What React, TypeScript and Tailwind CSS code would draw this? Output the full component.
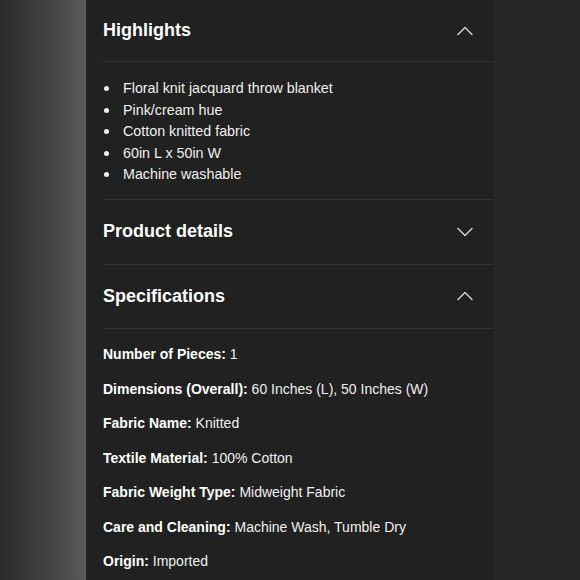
import { ReactNode } from "react";

type SectionProps = {
  title: string;
  open: boolean;
  height: string;
  children?: ReactNode;
};

const Chevron = ({ up }: { up: boolean }) => (
  <svg width="16" height="10" viewBox="0 0 16 10" fill="none" className="text-[#d6d6d6]">
    <path
      d={up ? "M1 8.5 L8 1.5 L15 8.5" : "M1 1.5 L8 8.5 L15 1.5"}
      stroke="currentColor"
      strokeWidth="1.4"
      strokeLinecap="round"
      strokeLinejoin="round"
    />
  </svg>
);

const Section = ({ title, open, height, children }: SectionProps) => (
  <div>
    <div className={`flex items-center justify-between border-b border-[#343434] pr-[21px] ${height}`}>
      <h2 className="text-[18px] font-bold text-white">{title}</h2>
      <Chevron up={open} />
    </div>
    {children}
  </div>
);

const highlights = [
  "Floral knit jacquard throw blanket",
  "Pink/cream hue",
  "Cotton knitted fabric",
  "60in L x 50in W",
  "Machine washable",
];

const specs: [string, string][] = [
  ["Number of Pieces:", "1"],
  ["Dimensions (Overall):", "60 Inches (L), 50 Inches (W)"],
  ["Fabric Name:", "Knitted"],
  ["Textile Material:", "100% Cotton"],
  ["Fabric Weight Type:", "Midweight Fabric"],
  ["Care and Cleaning:", "Machine Wash, Tumble Dry"],
  ["Origin:", "Imported"],
];

export default function App() {
  return (
    <div
      className="flex h-[580px] w-[580px] overflow-hidden bg-[#272727]"
      style={{ fontFamily: '"Liberation Sans", Arial, sans-serif' }}
    >
      <div className="w-[86px] shrink-0 bg-gradient-to-r from-[#2b2b2b] via-[#404040] to-[#5a5a5a]" />
      <div className="w-[408px] shrink-0 bg-[#212121] pl-[17px]">
        <Section title="Highlights" open height="h-[62px]">
          <ul className="border-b border-[#343434] pt-[16px] pb-[13px]">
            {highlights.map((item) => (
              <li key={item} className="flex items-center text-[14.3px] leading-[21.5px] text-[#f0f0f0]">
                <span className="ml-[1px] mr-[14px] h-[5px] w-[5px] rounded-full bg-[#f0f0f0]" />
                {item}
              </li>
            ))}
          </ul>
        </Section>
        <Section title="Product details" open={false} height="h-[65px]" />
        <Section title="Specifications" open height="h-[64px]">
          <div className="pt-[8.5px]">
            {specs.map(([label, value]) => (
              <p key={label} className="text-[14px] leading-[34.5px] text-[#f0f0f0]">
                <span className="font-bold text-white">{label}</span> {value}
              </p>
            ))}
          </div>
        </Section>
      </div>
      <div className="flex-1 bg-[#272727]" />
    </div>
  );
}
